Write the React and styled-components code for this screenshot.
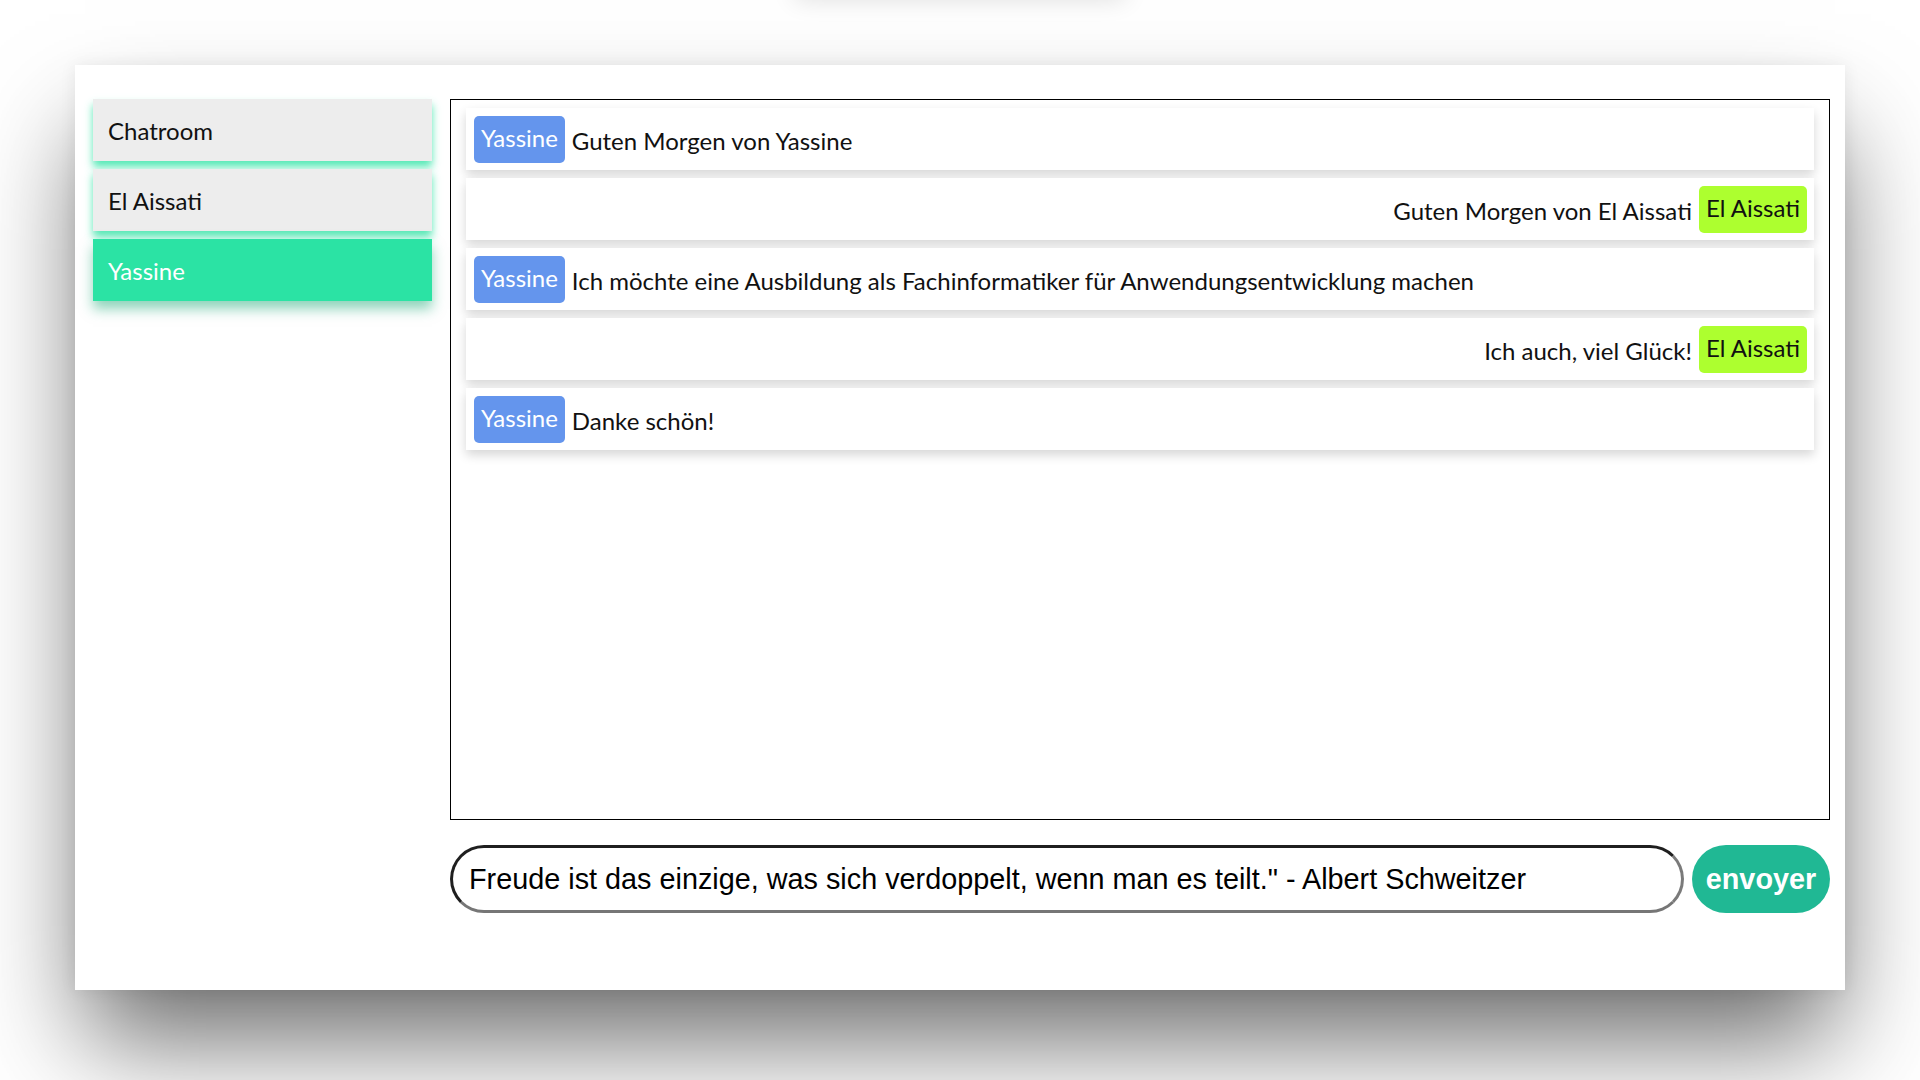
import React from 'react';
import styled, { createGlobalStyle } from 'styled-components';

const GlobalStyle = createGlobalStyle`
  html, body {
    margin: 0;
    padding: 0;
    background: #fff;
    overflow: hidden;
  }
  body {
    font-family: Lato, "Open Sans", sans-serif;
  }
  * {
    box-sizing: border-box;
  }
`;

const contacts = [
  { id: 1, name: 'Chatroom' },
  { id: 2, name: 'El Aissati' },
  { id: 3, name: 'Yassine', active: true },
];

const messages = [
  { id: 1, from: 'Yassine', mine: true, text: 'Guten Morgen von Yassine' },
  { id: 2, from: 'El Aissati', text: 'Guten Morgen von El Aissati' },
  { id: 3, from: 'Yassine', mine: true, text: 'Ich möchte eine Ausbildung als Fachinformatiker für Anwendungsentwicklung machen' },
  { id: 4, from: 'El Aissati', text: 'Ich auch, viel Glück!' },
  { id: 5, from: 'Yassine', mine: true, text: 'Danke schön!' },
];

const App = () => {
  return (
    <>
      <GlobalStyle />
      <HiddenHeader />
      <Page>
        <Card>
          <Sidebar>
            {contacts.map((c) => (
              <ContactItem key={c.id} $active={c.active}>
                {c.name}
              </ContactItem>
            ))}
          </Sidebar>
          <Main>
            <ChatBox>
              {messages.map((m) => (
                <MessageRow key={m.id} $mine={m.mine}>
                  {m.mine ? (
                    <>
                      <Author $mine>{m.from}</Author>
                      <MessageText>{m.text}</MessageText>
                    </>
                  ) : (
                    <>
                      <MessageText>{m.text}</MessageText>
                      <Author>{m.from}</Author>
                    </>
                  )}
                </MessageRow>
              ))}
            </ChatBox>
            <InputRow>
              <MessageInput
                type="text"
                defaultValue={'Freude ist das einzige, was sich verdoppelt, wenn man es teilt." - Albert Schweitzer'}
              />
              <SendButton>envoyer</SendButton>
            </InputRow>
          </Main>
        </Card>
      </Page>
    </>
  );
};

// header die oben aus dem Bild raus ist, nur der Schatten sieht man
const HiddenHeader = styled.div`
  width: 330px;
  height: 30px;
  margin: -30px auto 0;
  background: #fff;
  box-shadow: 0 0 24px rgba(0, 0, 0, 0.12);
`;

const Page = styled.div`
  padding: 65px 75px 0;
  height: 1080px;
`;

const Card = styled.div`
  display: flex;
  gap: 18px;
  width: 1770px;
  height: 925px;
  padding: 34px 15px 0 18px;
  background: #fff;
  box-shadow: 0 0 16px rgba(0, 0, 0, 0.07), 0 60px 100px -10px rgba(0, 0, 0, 0.58);
`;

const Sidebar = styled.div`
  display: flex;
  flex-direction: column;
  gap: 8px;
  width: 339px;
  flex-shrink: 0;
`;

const ContactItem = styled.div`
  display: flex;
  align-items: center;
  height: 62px;
  padding: 0 15px;
  font-size: 24px;
  color: ${(p) => (p.$active ? '#fff' : '#111')};
  background: ${(p) => (p.$active ? '#2be3a4' : '#ededed')};
  box-shadow: ${(p) =>
    p.$active
      ? '0 8px 12px rgba(30, 170, 120, 0.5)'
      : '0 6px 8px rgba(44, 227, 164, 0.8)'};
  cursor: pointer;
`;

const Main = styled.div`
  display: flex;
  flex-direction: column;
  flex: 1;
  min-width: 0;
`;

const ChatBox = styled.div`
  display: flex;
  flex-direction: column;
  gap: 8px;
  height: 721px;
  padding: 8px 15px;
  border: 1px solid #000;
  overflow: hidden;
`;

const MessageRow = styled.div`
  display: flex;
  align-items: center;
  justify-content: ${(p) => (p.$mine ? 'flex-start' : 'flex-end')};
  gap: 7px;
  height: 62px;
  flex-shrink: 0;
  padding: 0 7px 0 8px;
  background: #fff;
  box-shadow: 0 5px 10px rgba(0, 0, 0, 0.16);
`;

const Author = styled.span`
  height: 47px;
  line-height: 43px;
  padding: 0 7px 4px;
  border-radius: 5px;
  font-size: 24px;
  color: ${(p) => (p.$mine ? '#fff' : '#111')};
  background: ${(p) => (p.$mine ? '#6495ed' : '#adff2f')};
`;

const MessageText = styled.span`
  padding-top: 3px;
  font-size: 24px;
  color: #111;
`;

const InputRow = styled.div`
  display: flex;
  gap: 8px;
  margin-top: 25px;
  height: 68px;
`;

const MessageInput = styled.input`
  flex: 1;
  height: 68px;
  padding: 0 16px;
  border: 3px solid;
  border-color: #1f1f1f #7a7a7a #767676 #1f1f1f;
  border-radius: 34px;
  font-family: "Liberation Sans", Arial, sans-serif;
  font-size: 28.8px;
  color: #000;
  outline: none;
`;

const SendButton = styled.button`
  width: 138px;
  height: 68px;
  border: none;
  border-radius: 34px;
  background: #20b894;
  color: #fff;
  font-family: "Liberation Sans", Arial, sans-serif;
  font-size: 28.8px;
  font-weight: 700;
  cursor: pointer;
`;

export default App;
